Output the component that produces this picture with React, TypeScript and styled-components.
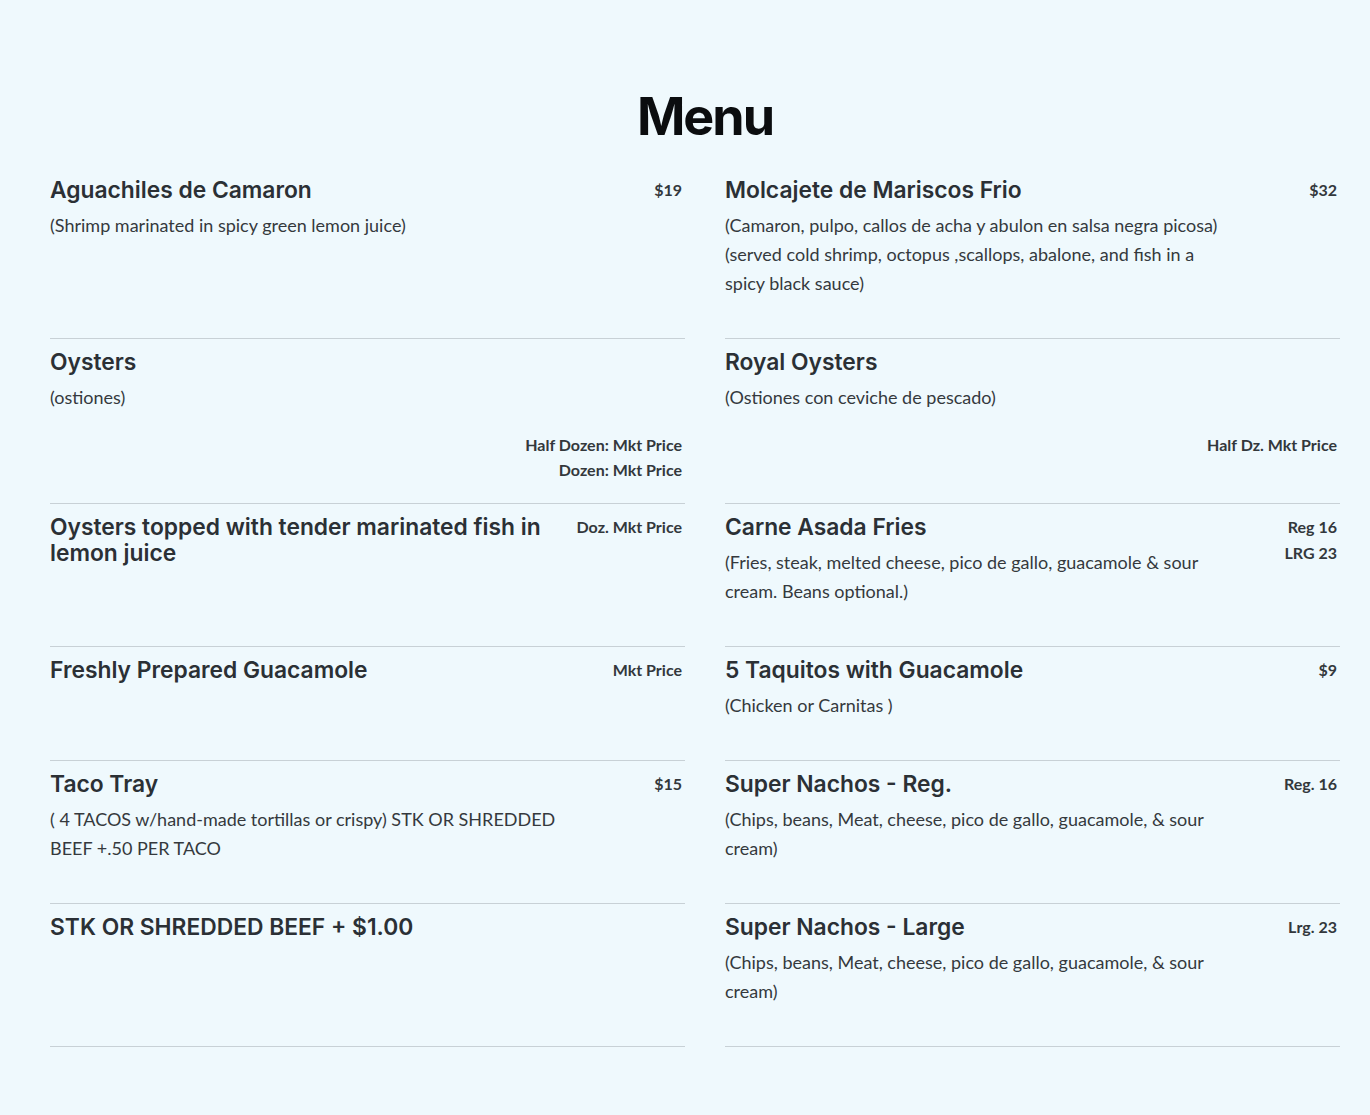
import styled, { createGlobalStyle } from 'styled-components'

const Global = createGlobalStyle`
  body {
    margin: 0;
    background: #eff9fd;
    font-family: Lato, "Liberation Sans", sans-serif;
    color: #2d3237;
  }
`

const Page = styled.main`
  padding: 87px 30px 68px 50px;
`

const Title = styled.h1`
  margin: 0 0 20px;
  padding-left: 20px;
  text-align: center;
  font-family: Inter, "Noto Sans", sans-serif;
  font-weight: 700;
  font-size: 52px;
  line-height: 60px;
  letter-spacing: -2px;
  color: #0b0d0f;
`

const Grid = styled.section`
  display: grid;
  grid-template-columns: 635px 615px;
  column-gap: 40px;
`

const Item = styled.article`
  padding: 10px 0 20px;
  border-bottom: 1px solid #c8d1d6;
`

const Head = styled.div`
  display: flex;
  justify-content: space-between;
  align-items: flex-start;
`

const Text = styled.div`
  width: 82%;
`

const Name = styled.h2`
  margin: 0 0 8px;
  font-family: Inter, "Noto Sans", sans-serif;
  font-weight: 600;
  font-size: 22.8px;
  line-height: 26px;
  color: #2b3035;
`

const DescBlock = styled.div`
  margin-bottom: 20px;
`

const Desc = styled.p`
  margin: 0;
  font-size: 18px;
  line-height: 29px;
  color: #35393d;
`

const Price = styled.div<{ $lh?: number }>`
  padding-right: 3px;
  text-align: right;
  font-weight: 700;
  font-size: 16px;
  line-height: ${(p) => p.$lh ?? 26}px;
  color: #33383c;
  white-space: nowrap;
`

const Variants = styled.div`
  padding: 0 0 1px;
`

type Dish = {
  name: string
  desc?: string[]
  price?: string[]
  variants?: string[]
}

const left: Dish[] = [
  { name: 'Aguachiles de Camaron', desc: ['(Shrimp marinated in spicy green lemon juice)'], price: ['$19'] },
  { name: 'Oysters', desc: ['(ostiones)'], variants: ['Half Dozen: Mkt Price', 'Dozen: Mkt Price'] },
  { name: 'Oysters topped with tender marinated fish in lemon juice', price: ['Doz. Mkt Price'] },
  { name: 'Freshly Prepared Guacamole', price: ['Mkt Price'] },
  {
    name: 'Taco Tray',
    desc: ['( 4 TACOS w/hand-made tortillas or crispy) STK OR SHREDDED BEEF +.50 PER TACO'],
    price: ['$15'],
  },
  { name: 'STK OR SHREDDED BEEF + $1.00' },
]

const right: Dish[] = [
  {
    name: 'Molcajete de Mariscos Frio',
    desc: [
      '(Camaron, pulpo, callos de acha y abulon en salsa negra picosa)',
      '(served cold shrimp, octopus ,scallops, abalone, and fish in a spicy black sauce)',
    ],
    price: ['$32'],
  },
  { name: 'Royal Oysters', desc: ['(Ostiones con ceviche de pescado)'], variants: ['Half Dz. Mkt Price'] },
  {
    name: 'Carne Asada Fries',
    desc: ['(Fries, steak, melted cheese, pico de gallo, guacamole & sour cream. Beans optional.)'],
    price: ['Reg 16', 'LRG 23'],
  },
  { name: '5 Taquitos with Guacamole', desc: ['(Chicken or Carnitas )'], price: ['$9'] },
  {
    name: 'Super Nachos - Reg.',
    desc: ['(Chips, beans, Meat, cheese, pico de gallo, guacamole, & sour cream)'],
    price: ['Reg. 16'],
  },
  {
    name: 'Super Nachos - Large',
    desc: ['(Chips, beans, Meat, cheese, pico de gallo, guacamole, & sour cream)'],
    price: ['Lrg. 23'],
  },
]

function MenuItem({ dish }: { dish: Dish }) {
  return (
    <Item>
      <Head>
        <Text>
          <Name>{dish.name}</Name>
          {dish.desc && (
            <DescBlock>
              {dish.desc.map((d) => (
                <Desc key={d}>{d}</Desc>
              ))}
            </DescBlock>
          )}
        </Text>
        {dish.price && (
          <Price>
            {dish.price.map((p) => (
              <div key={p}>{p}</div>
            ))}
          </Price>
        )}
      </Head>
      {dish.variants && (
        <Variants>
          <Price $lh={25}>
            {dish.variants.map((v) => (
              <div key={v}>{v}</div>
            ))}
          </Price>
        </Variants>
      )}
    </Item>
  )
}

function App() {
  const rows = left.map((l, i) => [l, right[i]])
  return (
    <Page>
      <Global />
      <Title>Menu</Title>
      <Grid>
        {rows.flat().map((d) => (
          <MenuItem key={d.name} dish={d} />
        ))}
      </Grid>
    </Page>
  )
}

export default App
